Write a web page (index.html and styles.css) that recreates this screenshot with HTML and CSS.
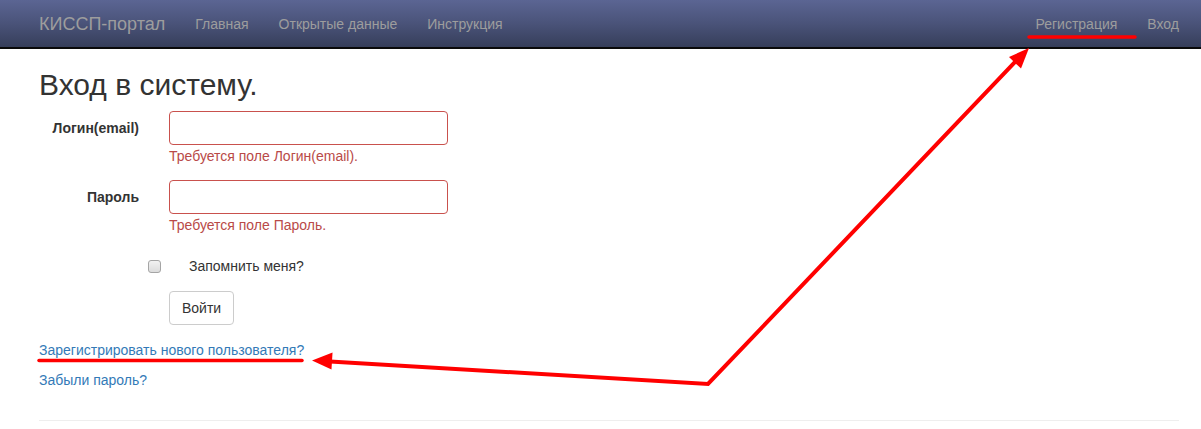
FILE: index.html
```html
<!DOCTYPE html>
<html lang="ru">
<head>
<meta charset="utf-8">
<title>Вход в систему</title>
<link rel="stylesheet" href="styles.css">
</head>
<body>
<header class="navbar">
  <div class="navbar-inner">
    <a class="brand" href="#">КИССП-портал</a>
    <ul class="nav">
      <li><a href="#">Главная</a></li>
      <li><a href="#">Открытые данные</a></li>
      <li><a href="#">Инструкция</a></li>
    </ul>
    <ul class="nav nav-right">
      <li><a href="#">Регистрация</a></li>
      <li><a href="#">Вход</a></li>
    </ul>
  </div>
</header>
<main class="container">
  <h2 class="title">Вход в систему.</h2>
  <form class="form">
    <div class="form-group">
      <label class="control-label" for="email">Логин(email)</label>
      <div class="field">
        <input class="form-control error" id="email" type="text">
        <span class="field-error">Требуется поле Логин(email).</span>
      </div>
    </div>
    <div class="form-group">
      <label class="control-label" for="pwd">Пароль</label>
      <div class="field">
        <input class="form-control error" id="pwd" type="password">
        <span class="field-error">Требуется поле Пароль.</span>
      </div>
    </div>
    <div class="form-group">
      <div class="field offset">
        <div class="checkbox">
          <input type="checkbox" id="remember">
          <label for="remember">Запомнить меня?</label>
        </div>
      </div>
    </div>
    <div class="form-group">
      <div class="field offset">
        <button type="button" class="btn">Войти</button>
      </div>
    </div>
  </form>
  <p class="link-line"><a href="#">Зарегистрировать нового пользователя?</a></p>
  <p class="link-line"><a href="#">Забыли пароль?</a></p>
  <hr class="rule">
</main>
<svg class="annotations" width="1201" height="429" viewBox="0 0 1201 429" aria-hidden="true">
  <line x1="1029" y1="37" x2="1135" y2="37" stroke="#ff0000" stroke-width="3.5" stroke-linecap="round"/>
  <line x1="39" y1="360.5" x2="302" y2="360.5" stroke="#ff0000" stroke-width="3.5" stroke-linecap="round"/>
  <polyline points="330,361.5 708,384 1017,60" fill="none" stroke="#ff0000" stroke-width="4" stroke-linejoin="miter"/>
  <polygon points="312,360.5 332.5,352.5 331.5,369.5" fill="#ff0000"/>
  <polygon points="1029,48 1021,68.5 1009,57" fill="#ff0000"/>
</svg>
</body>
</html>
```
FILE: styles.css
```css
* { box-sizing: border-box; }
html, body { margin: 0; padding: 0; }
body {
  font-family: "Liberation Sans", Arial, sans-serif;
  font-size: 14px;
  line-height: 20px;
  color: #333;
  background: #fff;
  position: relative;
  width: 1201px;
  height: 429px;
  overflow: hidden;
}
a { text-decoration: none; }

.navbar {
  height: 49px;
  background: linear-gradient(to bottom, #5b6593 0%, #4a5379 50%, #363e5a 100%);
  border-bottom: 2px solid #0a0a0a;
}
.navbar-inner {
  display: flex;
  align-items: center;
  height: 47px;
  padding: 0 7px 0 24px;
}
.brand {
  font-size: 18px;
  line-height: 20px;
  padding: 0 15px;
  color: #9d9d9d;
}
.nav {
  list-style: none;
  margin: 0;
  padding: 0;
  display: flex;
}
.nav a {
  display: block;
  padding: 0 15px;
  color: #9d9d9d;
  font-size: 14px;
  line-height: 20px;
}
.nav-right { margin-left: auto; }

.container {
  width: 1170px;
  margin-left: 24px;
  padding: 0 15px;
}
.title {
  font-size: 30px;
  font-weight: 500;
  line-height: 33px;
  margin: 19px 0 10px;
  color: #333;
}
.form { margin: 0; }
.form-group {
  display: flex;
  align-items: flex-start;
  margin-bottom: 15px;
}
.control-label {
  width: 100px;
  flex: none;
  text-align: right;
  font-weight: bold;
  padding-top: 7px;
  line-height: 20px;
}
.field {
  margin-left: 30px;
  display: flex;
  flex-direction: column;
  align-items: flex-start;
}
.field.offset { margin-left: 130px; }
.form-control {
  width: 279px;
  height: 34px;
  padding: 6px 12px;
  border: 1px solid #ccc;
  border-radius: 4px;
  font: inherit;
  background: #fff;
  display: block;
  margin: 0;
}
.form-control.error { border-color: #c9514d; }
.field-error {
  color: #b94a48;
  line-height: 20px;
  height: 20px;
  padding-top: 1px;
}
.checkbox {
  display: flex;
  align-items: center;
  height: 27px;
  padding-top: 7px;
}
.checkbox input {
  appearance: none;
  -webkit-appearance: none;
  width: 13px;
  height: 13px;
  margin: 0 0 0 -21px;
  flex: none;
  border: 1px solid #a5a5a5;
  border-radius: 3px;
  background: linear-gradient(to bottom, #f2f2f2, #dcdcdc);
}
.checkbox label {
  margin-left: 28px;
  line-height: 20px;
}
.btn {
  font: inherit;
  font-size: 14px;
  line-height: 20px;
  padding: 6px 12px;
  height: 34px;
  color: #333;
  background: #fff;
  border: 1px solid #ccc;
  border-radius: 4px;
  margin: 0;
}
.link-line {
  margin: 0 0 10px;
  line-height: 20px;
}
.link-line a { color: #337ab7; }
.rule {
  margin: 30px 0 0;
  border: 0;
  border-top: 1px solid #eee;
}
.annotations {
  position: absolute;
  left: 0;
  top: 0;
  pointer-events: none;
}
```
